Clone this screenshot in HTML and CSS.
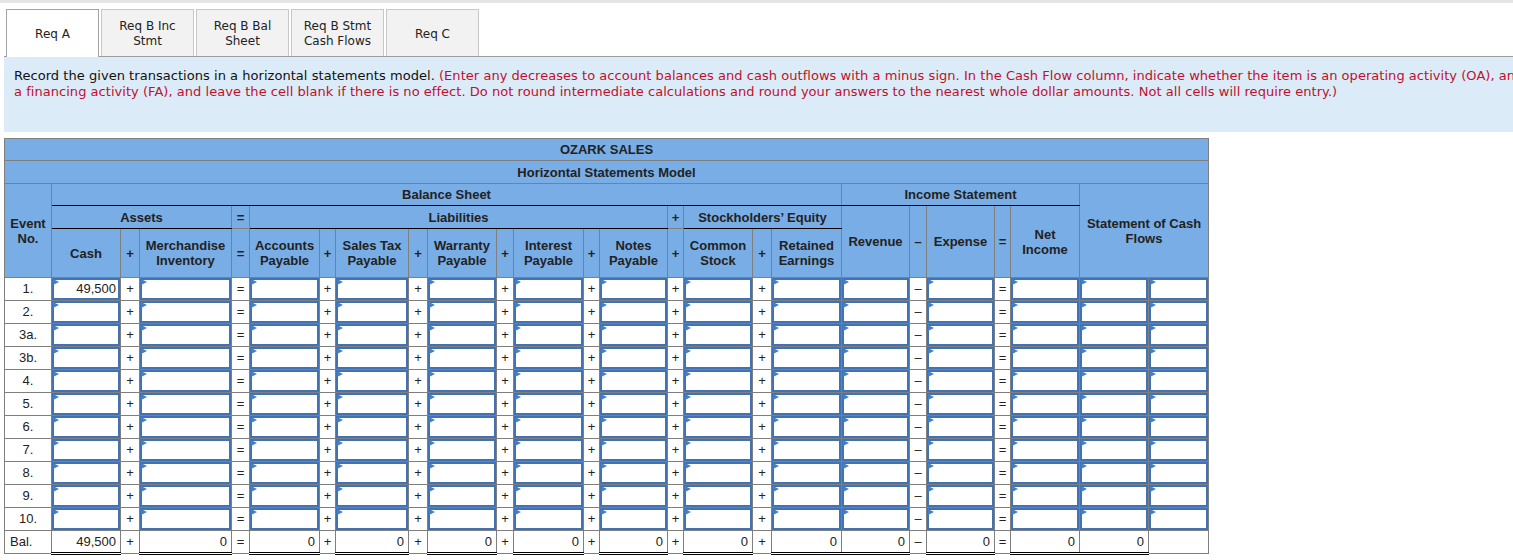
FILE: index.html
```html
<!DOCTYPE html>
<html>
<head>
<meta charset="utf-8">
<link rel="stylesheet" href="styles.css">
</head>
<body>
<div class="topbar"></div>
<div class="page">
  <div class="tabs">
    <div class="tab active">Req A</div>
    <div class="tab">Req B Inc<br>Stmt</div>
    <div class="tab">Req B Bal<br>Sheet</div>
    <div class="tab">Req B Stmt<br>Cash Flows</div>
    <div class="tab">Req C</div>
  </div>
  <div class="instr">
    <span>Record the given transactions in a horizontal statements model.</span> <span class="red">(Enter any decreases to account balances and cash outflows with a minus sign. In the Cash Flow column, indicate whether the item is an operating activity (OA), and<br>a financing activity (FA), and leave the cell blank if there is no effect. Do not round intermediate calculations and round your answers to the nearest whole dollar amounts. Not all cells will require entry.)</span>
  </div>
  <table class="hsm">
    <colgroup>
      <col style="width:47px"><col style="width:69px"><col style="width:19px"><col style="width:92px"><col style="width:18px"><col style="width:70px"><col style="width:16px"><col style="width:73px"><col style="width:19px"><col style="width:69px"><col style="width:17px"><col style="width:70px"><col style="width:16px"><col style="width:68px"><col style="width:16px"><col style="width:69px"><col style="width:19px"><col style="width:70px"><col style="width:68px"><col style="width:17px"><col style="width:68px"><col style="width:16px"><col style="width:69px"><col style="width:69px"><col style="width:60px">
    </colgroup>
    <thead>
      <tr class="h1"><th colspan="25">OZARK SALES</th></tr>
      <tr class="h2"><th colspan="25">Horizontal Statements Model</th></tr>
      <tr class="h3">
        <th rowspan="3">Event<br>No.</th>
        <th colspan="17" class="blk">Balance Sheet</th>
        <th colspan="5" class="blk">Income Statement</th>
        <th colspan="2" rowspan="3">Statement of Cash<br>Flows</th>
      </tr>
      <tr class="h4">
        <th colspan="3" class="blk">Assets</th>
        <th>=</th>
        <th colspan="9" class="blk">Liabilities</th>
        <th>+</th>
        <th colspan="3" class="blk">Stockholders’ Equity</th>
        <th rowspan="2">Revenue</th>
        <th rowspan="2">–</th>
        <th rowspan="2">Expense</th>
        <th rowspan="2">=</th>
        <th rowspan="2">Net<br>Income</th>
      </tr>
      <tr class="h5">
        <th>Cash</th><th>+</th><th>Merchandise<br>Inventory</th><th>=</th><th>Accounts<br>Payable</th><th>+</th><th>Sales Tax<br>Payable</th><th>+</th><th>Warranty<br>Payable</th><th>+</th><th>Interest<br>Payable</th><th>+</th><th>Notes<br>Payable</th><th>+</th><th>Common<br>Stock</th><th>+</th><th>Retained<br>Earnings</th>
      </tr>
    </thead>
    <tbody>
      <tr class="row"><td class="ev">1.</td><td class="in"><span class="box">49,500</span></td><td class="op">+</td><td class="in"><span class="box"></span></td><td class="op">=</td><td class="in"><span class="box"></span></td><td class="op">+</td><td class="in"><span class="box"></span></td><td class="op">+</td><td class="in"><span class="box"></span></td><td class="op">+</td><td class="in"><span class="box"></span></td><td class="op">+</td><td class="in"><span class="box"></span></td><td class="op">+</td><td class="in"><span class="box"></span></td><td class="op">+</td><td class="in"><span class="box"></span></td><td class="in"><span class="box"></span></td><td class="op">–</td><td class="in"><span class="box"></span></td><td class="op">=</td><td class="in"><span class="box"></span></td><td class="in"><span class="box"></span></td><td class="in"><span class="box"></span></td></tr>
      <tr class="row"><td class="ev">2.</td><td class="in"><span class="box"></span></td><td class="op">+</td><td class="in"><span class="box"></span></td><td class="op">=</td><td class="in"><span class="box"></span></td><td class="op">+</td><td class="in"><span class="box"></span></td><td class="op">+</td><td class="in"><span class="box"></span></td><td class="op">+</td><td class="in"><span class="box"></span></td><td class="op">+</td><td class="in"><span class="box"></span></td><td class="op">+</td><td class="in"><span class="box"></span></td><td class="op">+</td><td class="in"><span class="box"></span></td><td class="in"><span class="box"></span></td><td class="op">–</td><td class="in"><span class="box"></span></td><td class="op">=</td><td class="in"><span class="box"></span></td><td class="in"><span class="box"></span></td><td class="in"><span class="box"></span></td></tr>
      <tr class="row"><td class="ev">3a.</td><td class="in"><span class="box"></span></td><td class="op">+</td><td class="in"><span class="box"></span></td><td class="op">=</td><td class="in"><span class="box"></span></td><td class="op">+</td><td class="in"><span class="box"></span></td><td class="op">+</td><td class="in"><span class="box"></span></td><td class="op">+</td><td class="in"><span class="box"></span></td><td class="op">+</td><td class="in"><span class="box"></span></td><td class="op">+</td><td class="in"><span class="box"></span></td><td class="op">+</td><td class="in"><span class="box"></span></td><td class="in"><span class="box"></span></td><td class="op">–</td><td class="in"><span class="box"></span></td><td class="op">=</td><td class="in"><span class="box"></span></td><td class="in"><span class="box"></span></td><td class="in"><span class="box"></span></td></tr>
      <tr class="row"><td class="ev">3b.</td><td class="in"><span class="box"></span></td><td class="op">+</td><td class="in"><span class="box"></span></td><td class="op">=</td><td class="in"><span class="box"></span></td><td class="op">+</td><td class="in"><span class="box"></span></td><td class="op">+</td><td class="in"><span class="box"></span></td><td class="op">+</td><td class="in"><span class="box"></span></td><td class="op">+</td><td class="in"><span class="box"></span></td><td class="op">+</td><td class="in"><span class="box"></span></td><td class="op">+</td><td class="in"><span class="box"></span></td><td class="in"><span class="box"></span></td><td class="op">–</td><td class="in"><span class="box"></span></td><td class="op">=</td><td class="in"><span class="box"></span></td><td class="in"><span class="box"></span></td><td class="in"><span class="box"></span></td></tr>
      <tr class="row"><td class="ev">4.</td><td class="in"><span class="box"></span></td><td class="op">+</td><td class="in"><span class="box"></span></td><td class="op">=</td><td class="in"><span class="box"></span></td><td class="op">+</td><td class="in"><span class="box"></span></td><td class="op">+</td><td class="in"><span class="box"></span></td><td class="op">+</td><td class="in"><span class="box"></span></td><td class="op">+</td><td class="in"><span class="box"></span></td><td class="op">+</td><td class="in"><span class="box"></span></td><td class="op">+</td><td class="in"><span class="box"></span></td><td class="in"><span class="box"></span></td><td class="op">–</td><td class="in"><span class="box"></span></td><td class="op">=</td><td class="in"><span class="box"></span></td><td class="in"><span class="box"></span></td><td class="in"><span class="box"></span></td></tr>
      <tr class="row"><td class="ev">5.</td><td class="in"><span class="box"></span></td><td class="op">+</td><td class="in"><span class="box"></span></td><td class="op">=</td><td class="in"><span class="box"></span></td><td class="op">+</td><td class="in"><span class="box"></span></td><td class="op">+</td><td class="in"><span class="box"></span></td><td class="op">+</td><td class="in"><span class="box"></span></td><td class="op">+</td><td class="in"><span class="box"></span></td><td class="op">+</td><td class="in"><span class="box"></span></td><td class="op">+</td><td class="in"><span class="box"></span></td><td class="in"><span class="box"></span></td><td class="op">–</td><td class="in"><span class="box"></span></td><td class="op">=</td><td class="in"><span class="box"></span></td><td class="in"><span class="box"></span></td><td class="in"><span class="box"></span></td></tr>
      <tr class="row"><td class="ev">6.</td><td class="in"><span class="box"></span></td><td class="op">+</td><td class="in"><span class="box"></span></td><td class="op">=</td><td class="in"><span class="box"></span></td><td class="op">+</td><td class="in"><span class="box"></span></td><td class="op">+</td><td class="in"><span class="box"></span></td><td class="op">+</td><td class="in"><span class="box"></span></td><td class="op">+</td><td class="in"><span class="box"></span></td><td class="op">+</td><td class="in"><span class="box"></span></td><td class="op">+</td><td class="in"><span class="box"></span></td><td class="in"><span class="box"></span></td><td class="op">–</td><td class="in"><span class="box"></span></td><td class="op">=</td><td class="in"><span class="box"></span></td><td class="in"><span class="box"></span></td><td class="in"><span class="box"></span></td></tr>
      <tr class="row"><td class="ev">7.</td><td class="in"><span class="box"></span></td><td class="op">+</td><td class="in"><span class="box"></span></td><td class="op">=</td><td class="in"><span class="box"></span></td><td class="op">+</td><td class="in"><span class="box"></span></td><td class="op">+</td><td class="in"><span class="box"></span></td><td class="op">+</td><td class="in"><span class="box"></span></td><td class="op">+</td><td class="in"><span class="box"></span></td><td class="op">+</td><td class="in"><span class="box"></span></td><td class="op">+</td><td class="in"><span class="box"></span></td><td class="in"><span class="box"></span></td><td class="op">–</td><td class="in"><span class="box"></span></td><td class="op">=</td><td class="in"><span class="box"></span></td><td class="in"><span class="box"></span></td><td class="in"><span class="box"></span></td></tr>
      <tr class="row"><td class="ev">8.</td><td class="in"><span class="box"></span></td><td class="op">+</td><td class="in"><span class="box"></span></td><td class="op">=</td><td class="in"><span class="box"></span></td><td class="op">+</td><td class="in"><span class="box"></span></td><td class="op">+</td><td class="in"><span class="box"></span></td><td class="op">+</td><td class="in"><span class="box"></span></td><td class="op">+</td><td class="in"><span class="box"></span></td><td class="op">+</td><td class="in"><span class="box"></span></td><td class="op">+</td><td class="in"><span class="box"></span></td><td class="in"><span class="box"></span></td><td class="op">–</td><td class="in"><span class="box"></span></td><td class="op">=</td><td class="in"><span class="box"></span></td><td class="in"><span class="box"></span></td><td class="in"><span class="box"></span></td></tr>
      <tr class="row"><td class="ev">9.</td><td class="in"><span class="box"></span></td><td class="op">+</td><td class="in"><span class="box"></span></td><td class="op">=</td><td class="in"><span class="box"></span></td><td class="op">+</td><td class="in"><span class="box"></span></td><td class="op">+</td><td class="in"><span class="box"></span></td><td class="op">+</td><td class="in"><span class="box"></span></td><td class="op">+</td><td class="in"><span class="box"></span></td><td class="op">+</td><td class="in"><span class="box"></span></td><td class="op">+</td><td class="in"><span class="box"></span></td><td class="in"><span class="box"></span></td><td class="op">–</td><td class="in"><span class="box"></span></td><td class="op">=</td><td class="in"><span class="box"></span></td><td class="in"><span class="box"></span></td><td class="in"><span class="box"></span></td></tr>
      <tr class="row"><td class="ev">10.</td><td class="in"><span class="box"></span></td><td class="op">+</td><td class="in"><span class="box"></span></td><td class="op">=</td><td class="in"><span class="box"></span></td><td class="op">+</td><td class="in"><span class="box"></span></td><td class="op">+</td><td class="in"><span class="box"></span></td><td class="op">+</td><td class="in"><span class="box"></span></td><td class="op">+</td><td class="in"><span class="box"></span></td><td class="op">+</td><td class="in"><span class="box"></span></td><td class="op">+</td><td class="in"><span class="box"></span></td><td class="in"><span class="box"></span></td><td class="op">–</td><td class="in"><span class="box"></span></td><td class="op">=</td><td class="in"><span class="box"></span></td><td class="in"><span class="box"></span></td><td class="in"><span class="box"></span></td></tr>
      <tr class="row bal"><td class="evl">Bal.</td><td class="val">49,500</td><td class="op">+</td><td class="val">0</td><td class="op">=</td><td class="val">0</td><td class="op">+</td><td class="val">0</td><td class="op">+</td><td class="val">0</td><td class="op">+</td><td class="val">0</td><td class="op">+</td><td class="val">0</td><td class="op">+</td><td class="val">0</td><td class="op">+</td><td class="val">0</td><td class="val">0</td><td class="op">–</td><td class="val">0</td><td class="op">=</td><td class="val">0</td><td class="val">0</td><td class="empty"></td></tr>
    </tbody>
  </table>
</div>
</body>
</html>
```
FILE: styles.css
```css
html, body {
  margin: 0;
  padding: 0;
  background: #fff;
  overflow: hidden;
}
body {
  font-family: "DejaVu Sans", Verdana, sans-serif;
  color: #222;
}
.topbar {
  height: 3px;
  background: #e4e4e4;
}
.page {
  padding-left: 4px;
}
.tabs {
  display: flex;
  gap: 2px;
  margin-top: 6px;
  padding-left: 2px;
  border-bottom: 1px solid #9c9c9c;
  height: 47px;
}
.tab {
  box-sizing: border-box;
  width: 93px;
  height: 47px;
  padding-top: 2px;
  border: 1px solid #c8c8c8;
  border-bottom: none;
  background: #f2f2f2;
  display: flex;
  align-items: center;
  justify-content: center;
  text-align: center;
  font-size: 12px;
  line-height: 15px;
  color: #222;
}
.tab.active {
  background: #fff;
  border-color: #a3a3a3;
  height: 48px;
  position: relative;
  z-index: 1;
}
.instr {
  background: #dbecf8;
  height: 75px;
  box-sizing: border-box;
  padding: 11px 0 0 10px;
  font-size: 13px;
  line-height: 16px;
  letter-spacing: 0.04px;
  white-space: nowrap;
  overflow: hidden;
  color: #111;
}
.instr .red {
  color: #c0102c;
}
.hsm {
  margin-top: 6px;
  border-collapse: collapse;
  table-layout: fixed;
  width: 1204px;
  font-family: "Liberation Sans", Arial, sans-serif;
  font-size: 13px;
  color: #222;
}
.hsm th, .hsm td {
  border: 1px solid #7f7f7f;
  padding: 0;
}
.hsm th {
  background: #79ade5;
  font-weight: bold;
  text-align: center;
  line-height: 15px;
  color: #222;
}
.hsm th.blk {
  border-bottom: 1px solid #000;
}
.h1 { height: 22px; }
.h2 { height: 23px; }
.h3 { height: 22px; }
.h4 { height: 23px; }
.h5 { height: 49px; }
.row { height: 23px; }
.hsm td {
  background: #fff;
  text-align: center;
  line-height: 18px;
  color: #222;
}
.hsm td.ev {
  text-align: center;
}
.hsm td.evl {
  text-align: left;
  padding-left: 5px;
}
.hsm td.op {
  text-align: center;
}
.hsm td.val {
  text-align: right;
  padding-right: 4px;
  border-bottom: 3px double #000;
}
.box {
  position: relative;
  display: block;
  height: 18px;
  border: 2px solid #4072b4;
  text-align: right;
  padding-right: 2px;
  line-height: 18px;
}
.box::before {
  content: "";
  position: absolute;
  left: -1px;
  top: -1px;
  border-left: 6px solid #3f7fcc;
  border-top: 3px solid transparent;
  border-bottom: 3px solid transparent;
}
```
